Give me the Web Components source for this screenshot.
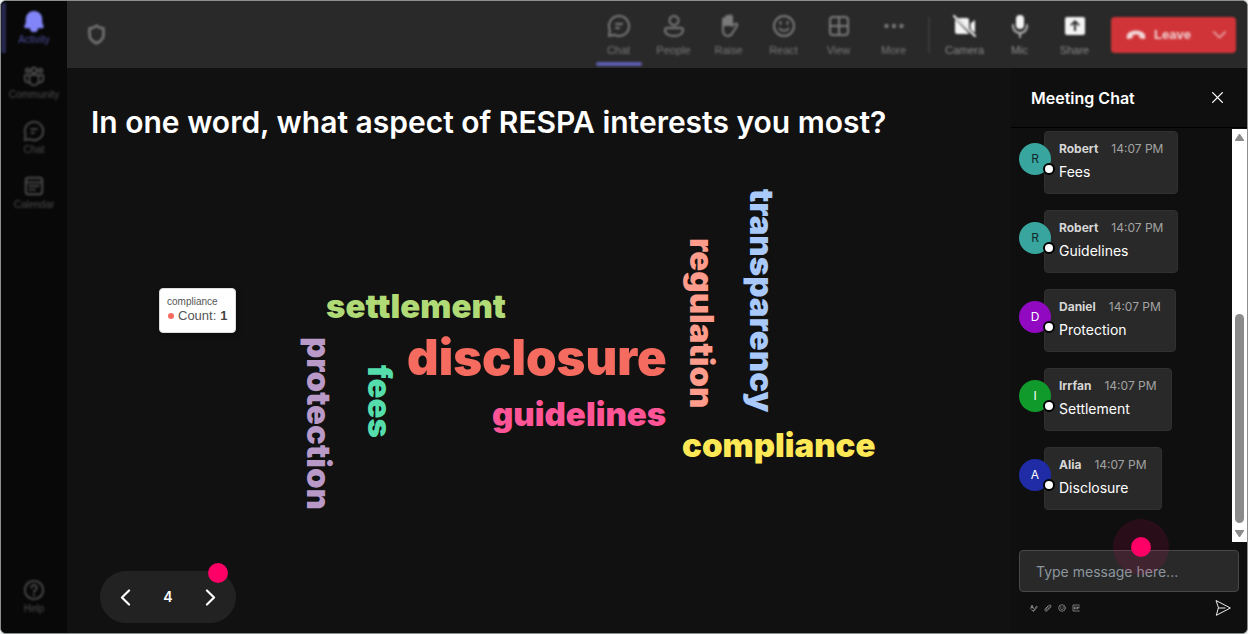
<!DOCTYPE html>
<html lang="en">
<head>
<meta charset="utf-8">
<meta name="viewport" content="width=device-width, initial-scale=1">
<title>Meeting</title>
<style>
  html { background: #e9eceb; }
  body { margin: 0; font-family: Inter, "Liberation Sans", sans-serif; color: #fff; }
</style>
</head>
<body>
<meeting-app></meeting-app>
<script>
const ICONS = {
  bell: '<path fill="currentColor" d="M12 2a8 8 0 0 0-8 8v4l-1.500 3.600a1 1 0 0 0 .9 1.400h17.200a1 1 0 0 0 .9-1.400L20 14v-4a8 8 0 0 0-8-8zM8.500 20a3.500 3.500 0 0 0 7 0z"/>',
  community: '<circle cx="12" cy="6" r="3"/><circle cx="5" cy="6" r="2"/><circle cx="19" cy="6" r="2"/><path d="M7 11h10v6a5 5 0 0 1-10 0zM7 11H2v4a4 4 0 0 0 5 4M17 11h5v4a4 4 0 0 1-5 4"/>',
  chat: '<path d="M12 2a10 10 0 1 1-4.700 18.800L2 22l.8-6A10 10 0 0 1 12 2zM9 10h6M9 14h3"/>',
  calendar: '<rect x="3" y="3" width="18" height="18" rx="3"/><path d="M3 8h18M7 12h2M11 12h2M15 12h2M7 16h2M11 16h2"/>',
  help: '<circle cx="12" cy="12" r="10"/><path d="M9 9.500a3 3 0 1 1 4.500 2.600c-1 .6-1.500 1-1.500 2.200M12 17v1"/>',
  shield: '<path d="M12 2c2.500 2 5 3 8 3v7c0 5-3.500 8-8 10-4.500-2-8-5-8-10V5c3 0 5.500-1 8-3z"/>',
  people: '<circle cx="12" cy="6.500" r="4.500"/><path d="M5 14h14a2 2 0 0 1 2 2c0 4-4 6-9 6s-9-2-9-6a2 2 0 0 1 2-2z"/>',
  hand: '<path d="M6 13V6a1.500 1.500 0 0 1 3 0V3.500a1.500 1.500 0 0 1 3 0V3a1.500 1.500 0 0 1 3 0v9l3-2c1.500-1 3 .5 2 2l-4 6c-1.500 3-3 4-5 4-3 0-5-2-5-6z"/><path fill="currentColor" d="M6 11V5l3-1 1-2h4l1 2v7z"/>',
  smile: '<circle cx="12" cy="12" r="10"/><path d="M7.500 14.500a5.500 5.500 0 0 0 9 0M8.500 8v2M15.500 8v2"/>',
  grid: '<rect x="3" y="3" width="18" height="18" rx="3"/><path d="M12 3v18M3 12h18"/>',
  more: '<g fill="currentColor" stroke="none"><circle cx="4.500" cy="12" r="2.200"/><circle cx="12" cy="12" r="2.200"/><circle cx="19.500" cy="12" r="2.200"/></g>',
  camera: '<path fill="currentColor" stroke="none" d="M5 4h9a2 2 0 0 1 2 2v9.500L5 4zM2 5l14 14.500c-.4.300-1 .5-1.500.5H4a2 2 0 0 1-2-2zM17.500 9.500 22 6v13l-4.500-4z"/><path d="m1 2 21 20"/>',
  mic: '<rect x="8" y="1" width="8" height="14" rx="4" fill="currentColor" stroke="none"/><path opacity=".7" d="M5 11v1a7 7 0 0 0 14 0v-1M12 19v4"/>',
  share: '<path fill="currentColor" stroke="none" fill-rule="evenodd" d="M4 3h16a2 2 0 0 1 2 2v14a2 2 0 0 1-2 2H4a2 2 0 0 1-2-2V5a2 2 0 0 1 2-2zm7 14h2V9.500l2.500 2.500 1.300-1.300L12 6l-4.800 4.700L8.500 12 11 9.500z"/>',
  phone: '<path fill="currentColor" stroke="none" d="M1 13c0-3.500 5-6.500 11-6.500S23 9.500 23 13v2.500c0 1-.8 1.600-1.800 1.400L17 16c-.8-.2-1.200-.8-1.200-1.600v-2.200c-2.400-.9-5.200-.9-7.600 0v2.200c0 .8-.4 1.400-1.200 1.600l-4.200.9C1.800 17.100 1 16.500 1 15.500z"/>',
  down: '<path d="m3 8 9 9 9-9"/>',
  close: '<path d="m3 3 18 18M21 3 3 21"/>',
  prev: '<path d="M17 2 7 12l10 10"/>',
  next: '<path d="m7 2 10 10L7 22"/>',
  send: '<path d="M2 1 23 12 2 23l3-11zM5 12h10"/>',
  format: '<path d="m2 14 4-11 4 11M3.500 10h6M11 21c2-1 9-9 11-13l-3-1c-2 4-7 10-8 14zM5 18l6 3"/>',
  clip: '<path d="M18 8 9 17c-2 2-5-1-3-3L15 4c4-3 8 1 5 5L10 20c-5 4-10-1-6-6l8-8"/>',
  gif: '<path d="M22 3H3v18h19M9 9H7v6h2v-2M12 9v6M22 9h-6v6M16 12h5"/>'
};
const icon = (name, size, stroke = 2) =>
  `<svg aria-hidden="true" width="${size}" height="${size}" viewBox="0 0 24 24" fill="none" stroke="currentColor" stroke-width="${stroke}" stroke-linecap="round" stroke-linejoin="round">${ICONS[name]}</svg>`;

const RESET = `*{box-sizing:border-box} button{font:inherit;color:inherit;background:none;border:0;padding:0;cursor:pointer} svg{display:block}`;

class Base extends HTMLElement {
  connectedCallback() {
    if (!this.shadowRoot) this.attachShadow({ mode: 'open' }).innerHTML = `<style>${RESET}${this.css()}</style>${this.html()}`;
  }
}

customElements.define('nav-item', class extends Base {
  css() { return `
    :host{display:block;height:55px;color:#4c4c4c;font:10px/12px "Liberation Sans",sans-serif}
    :host([active]){color:#4c4c9c}
    :host([active]) svg{color:#8285f7}
    a{display:flex;flex-direction:column;align-items:center;gap:2px;height:50px;padding-top:7px;color:inherit;text-decoration:none;filter:blur(1px)}
    :host([active]) a{box-shadow:inset 5px 0 #28284f}`; }
  html() { return `<a href="#">${icon(this.getAttribute('icon'), 22)}<span><slot></slot></span></a>`; }
});

customElements.define('side-nav', class extends Base {
  css() { return `
    :host{display:block;background:#080808}
    nav{display:flex;flex-direction:column;height:100%;padding:2px 0 6px}
    .end{margin-top:auto}`; }
  html() { return `<nav aria-label="Apps">
    <nav-item icon="bell" active>Activity</nav-item>
    <nav-item icon="community">Community</nav-item>
    <nav-item icon="chat">Chat</nav-item>
    <nav-item icon="calendar">Calendar</nav-item>
    <nav-item class="end" icon="help">Help</nav-item></nav>`; }
});

customElements.define('bar-button', class extends Base {
  css() { return `
    :host{display:block;width:55px;color:#7a7a7a;font:11px/12px "Liberation Sans",sans-serif}
    :host([bright]){color:#8c8c8c}
    :host([bright]) svg{color:#f4f4f4}
    button{display:flex;flex-direction:column;align-items:center;justify-content:flex-start;gap:6px;width:100%;height:67px;padding-top:13px;filter:blur(1px)}
    .mark{width:46px;height:4px;border-radius:2px}
    :host([active]) .mark{background:#5b5fb0}`; }
  html() { return `<button type="button">${icon(this.getAttribute('icon'), 24)}<span><slot></slot></span><i class="mark"></i></button>`; }
});

customElements.define('meeting-bar', class extends Base {
  css() { return `
    :host{display:flex;align-items:center;height:67px;padding:0 11px 0 19px;background:#292929}
    .shield{color:#747474;filter:blur(1px)}
    .tools{display:flex;align-items:center;margin-left:auto}
    hr{width:2px;height:36px;margin:0 7px;border:0;background:#3a3a3a;filter:blur(1px)}
    .leave{display:flex;align-items:center;width:125px;height:36px;margin-left:9px;border-radius:4px;background:#d13438;color:#f2d5d6;font:bold 13px/16px "Liberation Sans",sans-serif;filter:blur(1px)}
    .call{display:flex;align-items:center;flex:1;gap:8px;padding-left:15px}
    .menu{padding-right:9px;color:#e39a9c}`; }
  html() { return `
    <div class="shield">${icon('shield', 21, 3)}</div>
    <div class="tools">
      <bar-button icon="chat" active>Chat</bar-button><bar-button icon="people">People</bar-button>
      <bar-button icon="hand">Raise</bar-button><bar-button icon="smile">React</bar-button>
      <bar-button icon="grid">View</bar-button><bar-button icon="more">More</bar-button>
      <hr>
      <bar-button icon="camera" bright>Camera</bar-button><bar-button icon="mic" bright>Mic</bar-button>
      <bar-button icon="share" bright>Share</bar-button>
      <div class="leave"><button class="call" type="button">${icon('phone', 20)}<span>Leave</span></button>
      <button class="menu" type="button" aria-label="Leave options">${icon('down', 15, 3)}</button></div>
    </div>`; }
});

/* Word: text, x, y on the stage, colour, modifiers */
const WORDS = [
  ['settlement', 167, 110, '#b0da76', ''],
  ['disclosure', 248, 154, '#f66b60', 'big'],
  ['guidelines', 333, 218, '#ff5597', ''],
  ['compliance', 523, 249, '#ffe856', ''],
  ['protection', 144, 157, '#b899c8', 'down'],
  ['fees', 205, 185, '#55deac', 'down'],
  ['regulation', 527, 58, '#ff9c8b', 'down'],
  ['transparency', 587, 9, '#a8c9fa', 'down']
];
customElements.define('word-cloud', class extends Base {
  css() { return `
    :host{display:block;position:relative;width:760px;height:340px}
    .w{position:absolute;font:900 33px/32px Inter,sans-serif;white-space:nowrap}
    .big{font-size:49px;line-height:48px}
    .down{writing-mode:vertical-rl}
    .tip{position:absolute;left:0;top:108px;width:77px;height:45px;padding:7px;border:1px solid #ddd;border-radius:4px;background:#fff;color:#555;font:10px/12px "Liberation Sans",sans-serif;box-shadow:1px 2px 6px rgba(0,0,0,.3)}
    .row{display:flex;align-items:center;font-size:13px;line-height:16px;gap:4px}
    .row i{width:6px;height:6px;margin-left:1px;border-radius:50%;background:#f66b60}
    b{color:#444}`; }
  html() { return WORDS.map(([t, x, y, c, k]) => `<span class="w ${k}" style="left:${x}px;top:${y}px;color:${c}">${t}</span>`).join('') +
    `<div class="tip" role="tooltip"><div>compliance</div><div class="row"><i></i><span>Count:</span><b>1</b></div></div>`; }
});

customElements.define('slide-pager', class extends Base {
  css() { return `
    :host{display:flex;position:relative;align-items:center;justify-content:space-between;width:136px;height:52px;padding:0 17px;box-sizing:border-box;border-radius:26px;background:#222;font-size:14px;font-weight:600;line-height:20px}
    .dot{position:absolute;right:8px;top:-8px;width:20px;height:20px;border-radius:50%;background:#ff0066}`; }
  html() { return `<button type="button" aria-label="Previous">${icon('prev', 17, 3)}</button><span><slot></slot></span>
    <button type="button" aria-label="Next">${icon('next', 17, 3)}</button><i class="dot"></i>`; }
});

customElements.define('poll-slide', class extends Base {
  css() { return `
    :host{display:flex;flex-direction:column;min-width:0;padding:34px 0 10px;background:#111}
    h1{margin:0 24px 38px;font-size:30px;font-weight:600;line-height:40px}
    word-cloud{margin:0 auto}
    slide-pager{margin:auto 0 0 33px}`; }
  html() { return `<h1>In one word, what aspect of RESPA interests you most?</h1><word-cloud></word-cloud><slide-pager>4</slide-pager>`; }
});

customElements.define('chat-message', class extends Base {
  css() { return `
    :host{display:flex;align-items:flex-start}
    .avatar{position:relative;z-index:1;width:32px;height:32px;margin:12px -7px 0 0;border-radius:50%;background:var(--tone);color:var(--ink,#fff);font-size:12px;line-height:32px;text-align:center}
    .avatar i{position:absolute;right:-4px;bottom:0;width:12px;height:12px;border:2px solid #000;border-radius:50%;background:#fff}
    .bubble{height:63px;padding:9px 14px;border:1px solid #303030;border-radius:4px;background:#292929}
    .meta{display:flex;gap:13px;font-size:12px;line-height:16px;color:#a3a3a3}
    b{font-weight:700;color:#d6d6d6}
    p{margin:5px 0 0;font-size:14px;line-height:20px}`; }
  html() { const n = this.getAttribute('name'); return `<div class="avatar">${n[0]}<i></i></div>
    <div class="bubble"><div class="meta"><b>${n}</b><time>14:07 PM</time></div><p><slot></slot></p></div>`; }
});

customElements.define('chat-panel', class extends Base {
  css() { return `
    :host{display:flex;flex-direction:column;background:#0f0f0f}
    header{display:flex;align-items:center;justify-content:space-between;height:60px;padding:0 23px 0 20px;border-bottom:1px solid #000}
    h2{margin:0;font-size:16px;font-weight:600;line-height:24px}
    .log{display:flex;flex:1;min-height:0;margin-top:1px}
    .list{display:flex;flex-direction:column;flex:1;gap:16px;padding:2px 0 0 8px}
    .scroll{display:flex;flex-direction:column;align-items:center;justify-content:space-between;width:15px;padding:5px 0;background:#fff;color:#8b8b8b}
    .thumb{width:9px;height:209px;margin:auto 0 7px;border-radius:5px;background:#8b8b8b}
    form{position:relative;padding:8px 8px 17px;margin:0}
    input{display:block;width:100%;height:42px;padding:0 16px;border:1px solid #484848;border-radius:4px;background:#292929;color:#fff;font:14px/20px Inter,sans-serif}
    input::placeholder{color:#8c969f;opacity:1}
    .tools{display:flex;align-items:center;gap:6px;padding:8px 8px 0 11px;color:#aaa}
    .send{margin-left:auto;color:#eee}
    .touch{position:absolute;left:102px;top:-23px;width:56px;height:56px;border:18px solid rgba(255,0,102,.11);border-radius:50%;background:#ff0066;background-clip:padding-box;pointer-events:none}`; }
  html() { return `
    <header><h2>Meeting Chat</h2><button type="button" aria-label="Close">${icon('close', 13, 2.5)}</button></header>
    <div class="log"><div class="list">
      <chat-message name="Robert" style="--tone:#38a69f;--ink:#102a28">Fees</chat-message>
      <chat-message name="Robert" style="--tone:#38a69f;--ink:#102a28">Guidelines</chat-message>
      <chat-message name="Daniel" style="--tone:#9109c1">Protection</chat-message>
      <chat-message name="Irrfan" style="--tone:#109a2b">Settlement</chat-message>
      <chat-message name="Alia" style="--tone:#1f2ca5">Disclosure</chat-message>
    </div><div class="scroll" aria-hidden="true">
      <svg width="9" height="7"><path fill="currentColor" d="M4 0h1l4 6v1H0V6z"/></svg>
      <i class="thumb"></i>
      <svg width="9" height="7"><path fill="currentColor" d="M4 7h1l4-6V0H0v1z"/></svg></div></div>
    <form><input aria-label="Message" placeholder="Type message here...">
      <div class="tools">
        <button type="button" aria-label="Format">${icon('format', 8)}</button><button type="button" aria-label="Attach">${icon('clip', 8)}</button>
        <button type="button" aria-label="Emoji">${icon('smile', 8)}</button><button type="button" aria-label="GIF">${icon('gif', 8)}</button>
        <button class="send" type="button" aria-label="Send">${icon('send', 16, 1.5)}</button></div>
      <i class="touch"></i></form>`; }
});

customElements.define('meeting-app', class extends Base {
  css() { return `
    :host{display:grid;grid-template:67px 1fr / 66px 1fr 236px;min-height:100vh;box-sizing:border-box;border:1px solid #8b8f8e;border-radius:6px;overflow:hidden;background:#111}
    side-nav{grid-row:1 / 3}
    meeting-bar{grid-column:2 / 4}`; }
  html() { return `<side-nav></side-nav><meeting-bar></meeting-bar><poll-slide></poll-slide><chat-panel></chat-panel>`; }
});
</script>
</body>
</html>
